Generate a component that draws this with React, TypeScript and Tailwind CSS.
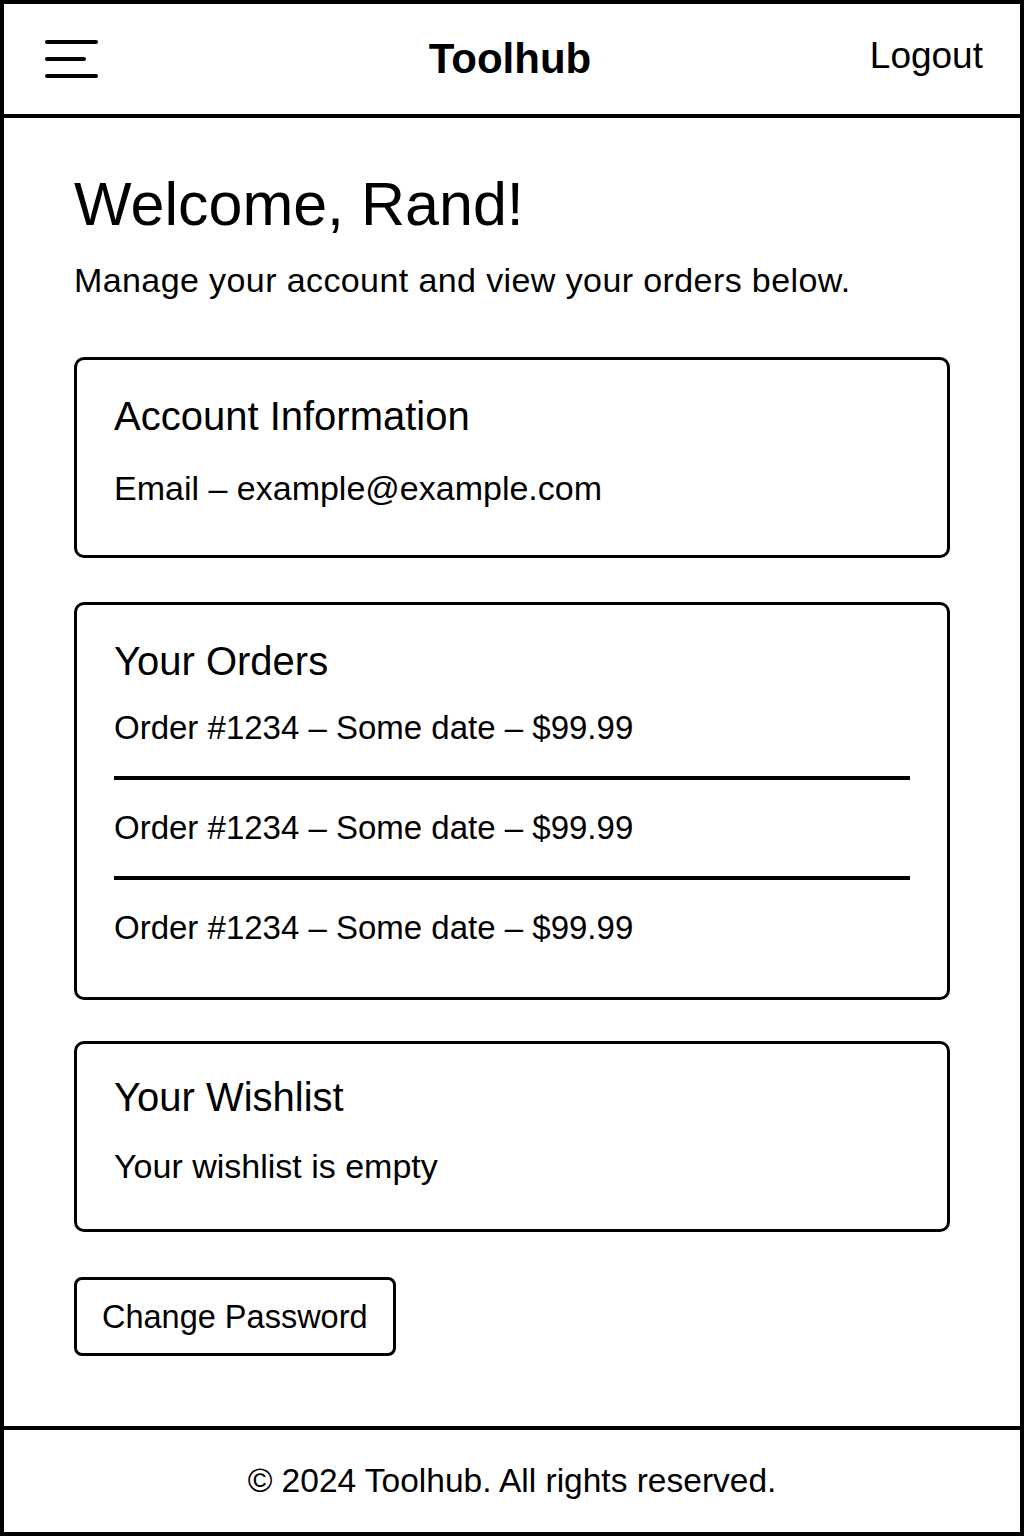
import React from 'react';

const orders = [
  { id: '1234', date: 'Some date', total: '$99.99' },
  { id: '1234', date: 'Some date', total: '$99.99' },
  { id: '1234', date: 'Some date', total: '$99.99' },
];

const Header: React.FC = () => {
  return (
    <header className="grid grid-cols-3 items-center h-[114px] pl-[41px] pr-[37px] border-b-4 border-black">
      <button className="flex flex-col gap-[13px] w-[53px]" aria-label="menu">
        <span className="block h-1 w-[53px] bg-black rounded-full"></span>
        <span className="block h-1 w-[41px] bg-black rounded-full"></span>
        <span className="block h-1 w-[53px] bg-black rounded-full"></span>
      </button>
      <div className="justify-self-center mr-[8px] text-[42px] leading-none font-bold">Toolhub</div>
      <div className="justify-self-end mb-2 text-[37px] leading-none">Logout</div>
    </header>
  );
};

const Card: React.FC<{ title: string; className?: string; children: React.ReactNode }> = ({ title, className, children }) => {
  return (
    <section className={`border-[3px] border-black rounded-[10px] px-[37px] ${className ?? ''}`}>
      <h2 className="text-[40px] leading-[48px]">{title}</h2>
      {children}
    </section>
  );
};

export default function App() {
  return (
    <div
      className="min-h-screen flex flex-col border-4 border-black bg-white text-black"
      style={{ fontFamily: '"Liberation Sans", Arial, sans-serif' }}
    >
      <Header />

      <main className="flex-1 px-[70px] pt-[50px]">
        <h1 className="text-[61px] leading-[72px]">Welcome, Rand!</h1>
        <p className="mt-[20px] text-[34px] leading-[40px] tracking-[0.4px]">
          Manage your account and view your orders below.
        </p>

        <Card title="Account Information" className="mt-[57px] pt-[32px] pb-[47px]">
          <p className="mt-[28px] text-[34px] leading-[40px]">Email – example@example.com</p>
        </Card>

        <Card title="Your Orders" className="mt-[44px] pt-[32px] pb-[21px]">
          <ul className="divide-y-4 divide-black">
            {orders.map((o, i) => (
              <li key={i} className={`${i === 0 ? 'pt-[23px]' : 'pt-[28px]'} pb-[28px] text-[33px] leading-[40px]`}>
                Order #{o.id} – {o.date} – {o.total}
              </li>
            ))}
          </ul>
        </Card>

        <Card title="Your Wishlist" className="mt-[41px] pt-[29px] pb-[43px]">
          <p className="mt-[25px] text-[34px] leading-[40px]">Your wishlist is empty</p>
        </Card>

        <button className="mt-[45px] border-[3px] border-black rounded-[8px] px-[25px] h-[79px] text-[32.5px] leading-[40px]">
          Change Password
        </button>
      </main>

      <footer className="border-t-4 border-black h-[106px] flex items-center justify-center text-[33.5px] leading-[40px]">
        © 2024 Toolhub. All rights reserved.
      </footer>
    </div>
  );
}
